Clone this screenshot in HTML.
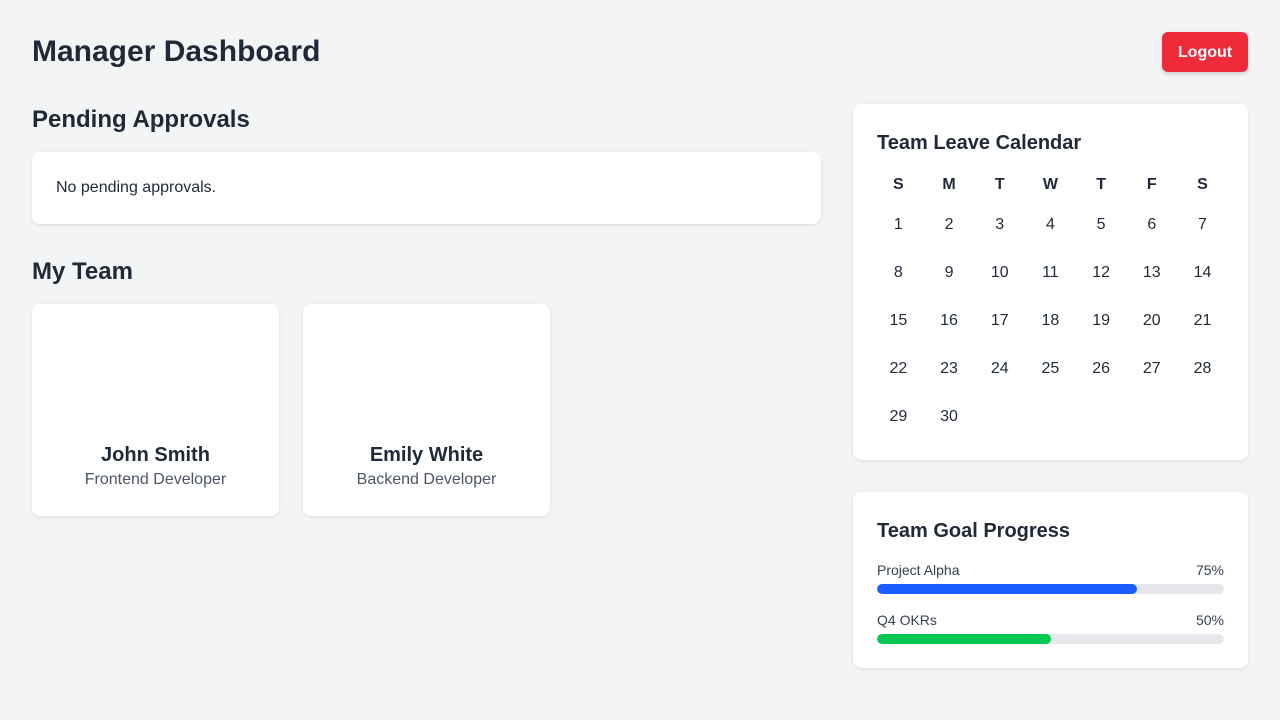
<!DOCTYPE html>
<html><head><meta charset="utf-8"><style>
*{box-sizing:border-box;margin:0;padding:0}
body{width:1280px;height:720px;background:#f3f4f6;font-family:"Liberation Sans",sans-serif;color:#1f2937;position:relative;overflow:hidden}
.abs{position:absolute}
h1{font-size:30px;font-weight:700;left:32px;top:35px}
h2{font-size:24px;font-weight:700}
.card{background:#fff;border-radius:8px;box-shadow:0 1px 3px rgba(0,0,0,.1)}
.btn{left:1162px;top:32px;width:86px;height:40px;background:#ef2b3a;color:#fff;border-radius:6px;font-weight:700;font-size:16px;text-align:center;line-height:41px;box-shadow:0 2px 4px rgba(0,0,0,.15)}
.mem{top:304px;width:247px;height:212px;text-align:center}
.mem b{position:absolute;left:0;right:0;top:140px;font-size:20px}
.mem span{position:absolute;left:0;right:0;top:167px;font-size:16px;color:#4b5563}
.cal{display:grid;grid-template-columns:repeat(7,50.7px);position:absolute;left:873px;top:174px}
.cal div{height:48px;text-align:center;font-size:16px;line-height:22px}
.cal .h{font-weight:700;height:40px}
.row{position:absolute;left:877px;width:347px;font-size:14px;color:#374151}
.bar{position:absolute;left:877px;width:347px;height:10px;border-radius:5px;background:#e5e7eb;overflow:hidden}
.bar i{display:block;height:100%;border-radius:5px}
</style></head><body>
<h1 class="abs">Manager Dashboard</h1>
<div class="abs btn">Logout</div>
<h2 class="abs" style="left:32px;top:106px">Pending Approvals</h2>
<div class="abs card" style="left:32px;top:152px;width:789px;height:72px"><div style="position:absolute;left:24px;top:27px;font-size:16px">No pending approvals.</div></div>
<h2 class="abs" style="left:32px;top:258px">My Team</h2>
<div class="abs card mem" style="left:32px"><b>John Smith</b><span>Frontend Developer</span></div>
<div class="abs card mem" style="left:303px"><b>Emily White</b><span>Backend Developer</span></div>
<div class="abs card" style="left:853px;top:104px;width:395px;height:356px"></div>
<div class="abs" style="left:877px;top:132px;font-size:20px;font-weight:700">Team Leave Calendar</div>
<div class="cal">
<div class="h">S</div><div class="h">M</div><div class="h">T</div><div class="h">W</div><div class="h">T</div><div class="h">F</div><div class="h">S</div>
<div>1</div><div>2</div><div>3</div><div>4</div><div>5</div><div>6</div><div>7</div>
<div>8</div><div>9</div><div>10</div><div>11</div><div>12</div><div>13</div><div>14</div>
<div>15</div><div>16</div><div>17</div><div>18</div><div>19</div><div>20</div><div>21</div>
<div>22</div><div>23</div><div>24</div><div>25</div><div>26</div><div>27</div><div>28</div>
<div>29</div><div>30</div>
</div>
<div class="abs card" style="left:853px;top:492px;width:395px;height:176px"></div>
<div class="abs" style="left:877px;top:520px;font-size:20px;font-weight:700">Team Goal Progress</div>
<div class="row" style="top:562px">Project Alpha<span style="float:right">75%</span></div>
<div class="bar" style="top:584px"><i style="width:75%;background:#1a5cff"></i></div>
<div class="row" style="top:612px">Q4 OKRs<span style="float:right">50%</span></div>
<div class="bar" style="top:634px"><i style="width:50%;background:#00c853"></i></div>
</body></html>
